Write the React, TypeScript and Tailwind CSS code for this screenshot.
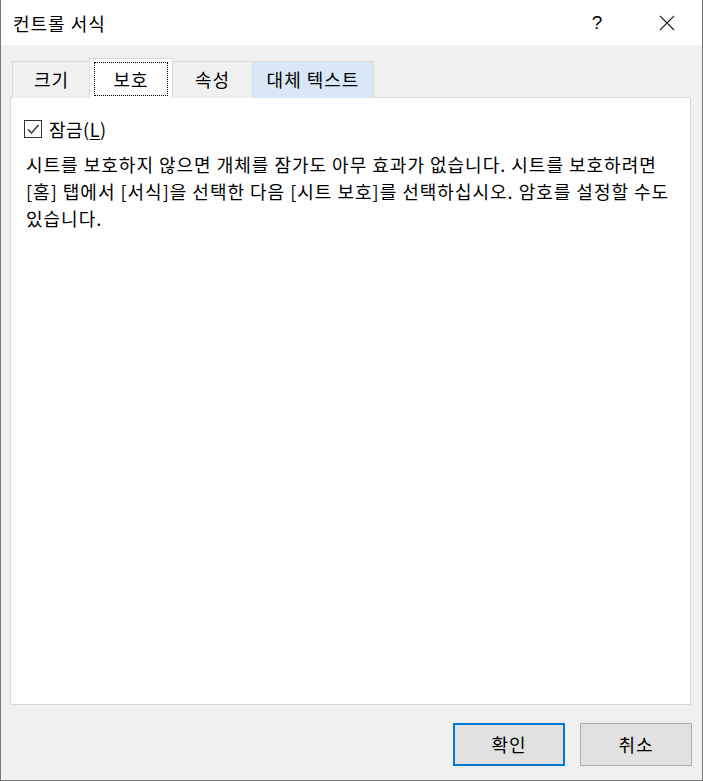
import React from "react";

const font = { fontFamily: '"Noto Sans CJK KR", "Noto Sans", sans-serif' };

export default function App() {
  return (
    <div
      className="w-[703px] h-[781px] flex flex-col bg-[#f0f0f0] border-x border-b border-[#777777] text-black overflow-hidden"
      style={font}
    >
      {/* title bar */}
      <div className="h-[45px] bg-white flex items-center shrink-0">
        <div className="pl-[12px] text-[18px] tracking-[1px] leading-none flex-1">컨트롤 서식</div>
        <div className="w-[46px] text-center text-[19px] leading-none mr-[24px]" style={{ fontFamily: '"Liberation Sans", sans-serif' }}>?</div>
        <div className="w-[46px] flex justify-center mr-[12px]">
          <svg width="16" height="16" viewBox="0 0 16 16">
            <path d="M1 1 L15 15 M15 1 L1 15" stroke="#222" strokeWidth="1.1" fill="none" />
          </svg>
        </div>
      </div>

      {/* body */}
      <div className="flex-1 flex flex-col px-[9px] pt-[13px]">
        {/* tabs */}
        <div className="flex items-end h-[40px] pl-[2px] relative z-10 -mb-px">
          <div className="h-[37px] w-[78px] border-t border-l border-[#d9d9d9] bg-[#f0f0f0] flex items-center justify-center text-[18px] tracking-[1px] pb-[1px]">
            크기
          </div>
          <div className="h-[40px] w-[84px] border-x border-t border-[#d9d9d9] bg-white flex items-start justify-center pt-[3px] -ml-px">
            <div className="w-[74px] h-[34px] border border-dotted border-black flex items-center justify-center text-[18px] tracking-[1px]">
              보호
            </div>
          </div>
          <div className="h-[37px] w-[80px] border-t border-r border-[#d9d9d9] bg-[#f0f0f0] flex items-center justify-center text-[18px] tracking-[1px] pb-[1px]">
            속성
          </div>
          <div className="h-[37px] w-[121px] border-t border-r border-[#d9d9d9] bg-[#d9e8f6] flex items-center justify-center text-[18px] tracking-[1px] pb-[1px]">
            대체 텍스트
          </div>
        </div>

        {/* panel */}
        <div className="h-[608px] w-[681px] bg-white border border-[#d9d9d9] pt-[22px] pl-[15px]">
          <div className="flex items-center gap-[7px] -ml-[2px]">
            <div className="w-[18px] h-[18px] border border-[#333333] flex items-center justify-center">
              <svg width="14" height="14" viewBox="0 0 14 14">
                <path d="M2 7.5 L5.5 11 L12.5 3" stroke="#333" strokeWidth="1.4" fill="none" />
              </svg>
            </div>
            <div className="text-[18px] tracking-[0.5px] leading-none">
              잠금(<span className="underline underline-offset-2">L</span>)
            </div>
          </div>
          <div className="mt-[13px] text-[18px] tracking-[1px] leading-[27px] whitespace-nowrap">
            <div>시트를 보호하지 않으면 개체를 잠가도 아무 효과가 없습니다. 시트를 보호하려면</div>
            <div>[홈] 탭에서 [서식]을 선택한 다음 [시트 보호]를 선택하십시오. 암호를 설정할 수도</div>
            <div>있습니다.</div>
          </div>
        </div>

        {/* buttons */}
        <div className="flex justify-end gap-[15px] mt-[18px] pr-[1px]">
          <button className="w-[112px] h-[43px] bg-[#e1e1e1] border-2 border-[#0078d7] text-[18px] tracking-[1px]">확인</button>
          <button className="w-[112px] h-[43px] bg-[#e1e1e1] border border-[#adadad] text-[18px] tracking-[1px]">취소</button>
        </div>
      </div>
    </div>
  );
}
